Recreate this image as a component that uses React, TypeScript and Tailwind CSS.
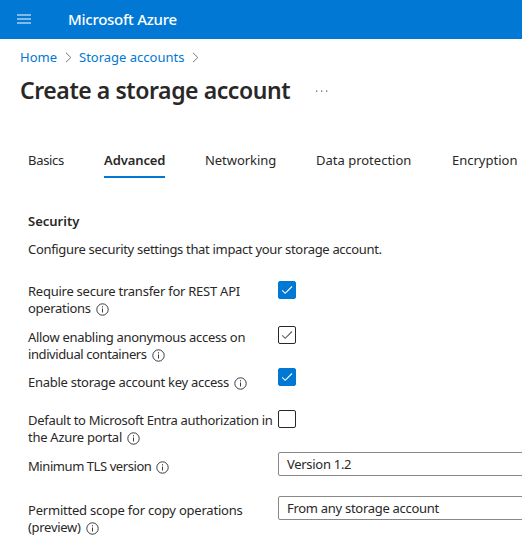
import React from "react";

function Info() {
  return (
    <svg className="ml-[5px] inline-block align-[-2.5px]" width="13" height="13" viewBox="0 0 13 13" fill="none" stroke="#3b3a39">
      <circle cx="6.5" cy="6.5" r="5.7" />
      <path d="M6.5 5.5v4M6.5 3.2v1.2" />
    </svg>
  );
}

function Check({ state }: { state: "on" | "off" | "disabled" }) {
  const look = state === "on" ? "bg-[#0078d4] border-[#0078d4]" : "bg-white border-[#292827]";
  return (
    <span className={`flex size-[18px] shrink-0 items-center justify-center rounded-[2px] border ${look}`}>
      {state !== "off" && (
        <svg className="shrink-0" width="16" height="16" viewBox="0 0 16 16" fill="none" strokeWidth="1.1" stroke={state === "on" ? "#fff" : "#605e5c"}>
          <path d="M3.2 8.3l3 3L13 4.5" />
        </svg>
      )}
    </span>
  );
}

type Line = { text: string; tracking: string };

function Row({ lines, className, pad, children }: { lines: Line[]; className: string; pad: string; children: React.ReactNode }) {
  return (
    <div className={`flex ${className}`}>
      <div className={`w-[250px] shrink-0 leading-[17px] whitespace-nowrap ${pad}`}>
        {lines.map((line, i) => (
          <div key={line.text} className="h-[17px]">
            <span className={line.tracking}>{line.text}</span>
            {i === lines.length - 1 && <Info />}
          </div>
        ))}
      </div>
      {children}
    </div>
  );
}

function Select({ value }: { value: string }) {
  return (
    <div className="h-[24px] w-[300px] shrink-0 rounded-[2px] border border-[#8a8886] pl-2 leading-[23px] tracking-[-0.29px]">
      {value}
    </div>
  );
}

function Chevron() {
  return (
    <svg width="7" height="11" viewBox="0 0 7 11" fill="none" stroke="#797775">
      <path d="M1 .8l4.8 4.7L1 10.2" />
    </svg>
  );
}

export default function App() {
  return (
    <div className="h-[551px] w-[522px] overflow-hidden bg-white font-['Noto_Sans',sans-serif] text-[13px] text-[#292827]">
      <header className="flex h-[39px] items-center bg-[#0078d4] pl-[17px] text-white">
        <svg width="14" height="11" viewBox="0 0 14 11" fill="#7fbbe9">
          <path d="M0 0h14v2H0zM0 4h14v2H0zM0 8h14v2H0z" />
        </svg>
        <span className="ml-[37px] text-[15px] font-medium tracking-[-0.27px]">Microsoft Azure</span>
      </header>
      <nav className="flex h-[37px] items-center pl-5 text-[#0078d4]">
        <span className="mr-2 w-[37px]">Home</span>
        <Chevron />
        <span className="ml-[7px] w-[113px]">Storage accounts</span>
        <Chevron />
      </nav>
      <div className="flex h-[30px] items-center pl-5">
        <h1 className="w-[296px] pb-0.5 text-[23px] font-semibold tracking-[-0.43px] whitespace-nowrap">Create a storage account</h1>
        <svg width="12" height="2" viewBox="0 0 12 2" fill="#605e5c">
          <path d="M0 .5h1.3v1.3H0zM5 .5h1.3v1.3H5zM10 .5h1.3v1.3H10z" />
        </svg>
      </div>
      <div className="mt-[42px] flex h-[30px] gap-10 pl-7 leading-[25px] whitespace-nowrap">
        <span className="w-9 tracking-[-0.3px]">Basics</span>
        <span className="w-[61px] border-b-2 border-[#0078d4] font-semibold tracking-[-0.1px]">Advanced</span>
        <span className="w-[71px] tracking-[-0.05px]">Networking</span>
        <span className="w-24">Data protection</span>
        <span>Encryption</span>
      </div>
      <main className="pl-7">
        <h2 className="mt-[33px] leading-[21px] font-semibold">Security</h2>
        <p className="mt-[7px] leading-5 tracking-[-0.32px]">Configure security settings that impact your storage account.</p>
        <Row
          className="mt-[22px] h-[45px]"
          pad="pt-[2px]"
          lines={[
            { text: "Require secure transfer for REST API", tracking: "tracking-[-0.25px]" },
            { text: "operations", tracking: "tracking-[-0.3px]" },
          ]}
        >
          <Check state="on" />
        </Row>
        <Row
          className="h-[42px]"
          pad="pt-[3px]"
          lines={[
            { text: "Allow enabling anonymous access on", tracking: "tracking-[-0.3px]" },
            { text: "individual containers", tracking: "tracking-[-0.41px]" },
          ]}
        >
          <Check state="disabled" />
        </Row>
        <Row
          className="h-[42px]"
          pad="pt-[6px]"
          lines={[{ text: "Enable storage account key access", tracking: "tracking-[-0.27px]" }]}
        >
          <Check state="on" />
        </Row>
        <Row
          className="h-[42px]"
          pad="pt-[2px]"
          lines={[
            { text: "Default to Microsoft Entra authorization in", tracking: "tracking-[-0.3px]" },
            { text: "the Azure portal", tracking: "tracking-[-0.27px]" },
          ]}
        >
          <Check state="off" />
        </Row>
        <Row
          className="h-[44px]"
          pad="pt-[6px]"
          lines={[{ text: "Minimum TLS version", tracking: "tracking-[-0.43px]" }]}
        >
          <Select value="Version 1.2" />
        </Row>
        <Row
          className="h-[44px]"
          pad="pt-[6px]"
          lines={[
            { text: "Permitted scope for copy operations", tracking: "tracking-[-0.21px]" },
            { text: "(preview)", tracking: "tracking-[-0.3px]" },
          ]}
        >
          <Select value="From any storage account" />
        </Row>
      </main>
    </div>
  );
}
